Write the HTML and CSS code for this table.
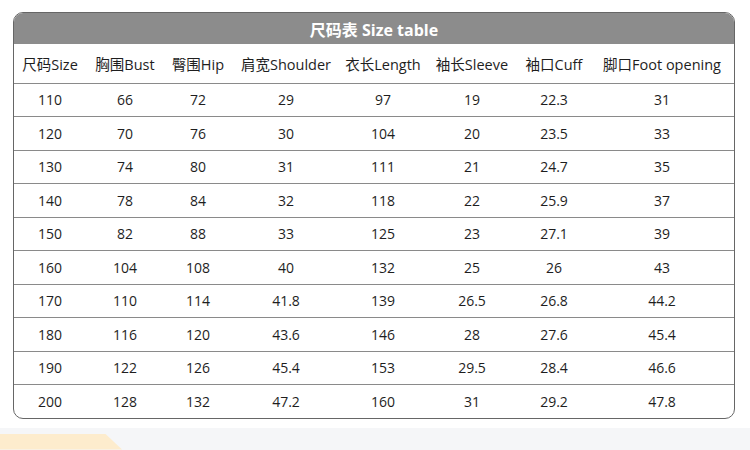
FILE: index.html
```html
<!DOCTYPE html>
<html lang="zh">
<head>
<meta charset="utf-8">
<link rel="stylesheet" href="styles.css">
</head>
<body>
<div class="sheet">
  <div class="title">尺码表 Size table</div>
  <div class="row hdr">
    <span>尺码Size</span><span>胸围Bust</span><span>臀围Hip</span><span>肩宽Shoulder</span><span>衣长Length</span><span>袖长Sleeve</span><span>袖口Cuff</span><span>脚口Foot opening</span>
  </div>
  <div class="row"><span>110</span><span>66</span><span>72</span><span>29</span><span>97</span><span>19</span><span>22.3</span><span>31</span></div>
  <div class="row"><span>120</span><span>70</span><span>76</span><span>30</span><span>104</span><span>20</span><span>23.5</span><span>33</span></div>
  <div class="row"><span>130</span><span>74</span><span>80</span><span>31</span><span>111</span><span>21</span><span>24.7</span><span>35</span></div>
  <div class="row"><span>140</span><span>78</span><span>84</span><span>32</span><span>118</span><span>22</span><span>25.9</span><span>37</span></div>
  <div class="row"><span>150</span><span>82</span><span>88</span><span>33</span><span>125</span><span>23</span><span>27.1</span><span>39</span></div>
  <div class="row"><span>160</span><span>104</span><span>108</span><span>40</span><span>132</span><span>25</span><span>26</span><span>43</span></div>
  <div class="row"><span>170</span><span>110</span><span>114</span><span>41.8</span><span>139</span><span>26.5</span><span>26.8</span><span>44.2</span></div>
  <div class="row"><span>180</span><span>116</span><span>120</span><span>43.6</span><span>146</span><span>28</span><span>27.6</span><span>45.4</span></div>
  <div class="row"><span>190</span><span>122</span><span>126</span><span>45.4</span><span>153</span><span>29.5</span><span>28.4</span><span>46.6</span></div>
  <div class="row"><span>200</span><span>128</span><span>132</span><span>47.2</span><span>160</span><span>31</span><span>29.2</span><span>47.8</span></div>
</div>
<div class="strip"><div class="tab"></div></div>
</body>
</html>
```
FILE: styles.css
```css
html, body {
  margin: 0;
  padding: 0;
  background: #ffffff;
}
body {
  width: 750px;
  height: 450px;
  overflow: hidden;
  font-family: "Open Sans", "Noto Sans CJK SC", sans-serif;
  color: #1e1e1e;
}
.sheet {
  margin: 12px 0 0 13px;
  width: 720px;
  border: 1.5px solid #666;
  border-radius: 10px;
  overflow: hidden;
}
.title {
  height: 31px;
  background: #8c8c8c;
  color: #fff;
  font-weight: 700;
  font-size: 16px;
  display: flex;
  align-items: center;
  justify-content: center;
}
.row {
  display: grid;
  grid-template-columns: 72px 78px 68px 108px 86px 92px 72px 1fr;
  height: 32.5px;
  align-items: center;
  font-size: 14px;
  border-top: 1px solid #8a8a8a;
}
.row span {
  text-align: center;
  white-space: nowrap;
}
.hdr {
  height: 38.5px;
  border-top: none;
  font-size: 14.5px;
}
.strip {
  margin-top: 9px;
  height: 22px;
  background: #f5f6f8;
  position: relative;
}
.tab {
  position: absolute;
  left: 0;
  bottom: 0;
  width: 122px;
  height: 16px;
  background: #fdeccd;
  clip-path: polygon(0 0, 105px 0, 122px 100%, 0 100%);
}
```
